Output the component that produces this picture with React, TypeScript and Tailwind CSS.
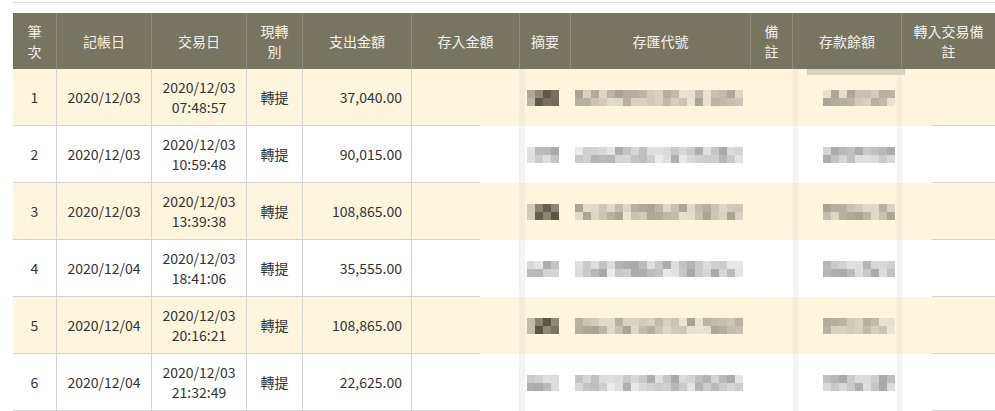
import React from "react";

const cols = "grid-cols-[44px_95px_95px_56px_109px_108px_51px_180px_42px_109px_93px]";

type Row = {
    no: number;
    postDate: string;
    txDate: string;
    txTime: string;
    type: string;
    out: string;
    seed: number;
    dark: boolean;
};

const rows: Row[] = [
    {no: 1, postDate: "2020/12/03", txDate: "2020/12/03", txTime: "07:48:57", type: "轉提", out: "37,040.00", seed: 3, dark: true},
    {no: 2, postDate: "2020/12/03", txDate: "2020/12/03", txTime: "10:59:48", type: "轉提", out: "90,015.00", seed: 11, dark: false},
    {no: 3, postDate: "2020/12/03", txDate: "2020/12/03", txTime: "13:39:38", type: "轉提", out: "108,865.00", seed: 23, dark: true},
    {no: 4, postDate: "2020/12/04", txDate: "2020/12/03", txTime: "18:41:06", type: "轉提", out: "35,555.00", seed: 37, dark: false},
    {no: 5, postDate: "2020/12/04", txDate: "2020/12/03", txTime: "20:16:21", type: "轉提", out: "108,865.00", seed: 41, dark: true},
    {no: 6, postDate: "2020/12/04", txDate: "2020/12/03", txTime: "21:32:49", type: "轉提", out: "22,625.00", seed: 53, dark: false},
];

// pseudo random gray mosaic, like the pixelated (censored) cells in the screenshot
const rand = (s: number) => {
    const x = Math.sin(s * 9301 + 49297) * 233280;
    return x - Math.floor(x);
};

const Mosaic = ({cells, seed, cream, dark}: { cells: number; seed: number; cream: boolean; dark?: boolean }) => {
    const grid: string[][] = [0, 1].map((r) =>
        Array.from({length: cells}, (_, c) => {
            let v = 155 + Math.floor(rand(seed + r * 31 + c * 7) * 80);
            if (dark && c >= cells - 3) v = 60 + Math.floor(rand(seed + c + r) * 70);
            const g = cream ? [v, v - 4, v - 22] : [v, v, v];
            return `rgb(${g[0]},${g[1]},${Math.max(g[2], 0)})`;
        })
    );
    return (
        <div className="flex flex-col opacity-85">
            {grid.map((line, r) => (
                <div key={r} className="flex">
                    {line.map((c, i) => (
                        <div key={i} className="w-[8px] h-[8px]" style={{backgroundColor: c}}/>
                    ))}
                </div>
            ))}
        </div>
    );
};

const App = () => {
    return (
        <div className="w-[995px] h-[411px] overflow-hidden bg-white pl-[13px] text-[14px] text-[#333333]"
             style={{fontFamily: '"Noto Sans CJK TC", "Noto Sans", sans-serif'}}>
            <div className="mt-[2px] h-px bg-[#dedede]"/>

            {/* header */}
            <div className={`mt-[10px] grid ${cols} h-[56px] bg-[#77745f] text-[#f3f2ea] leading-5`}>
                <div className="flex items-center justify-center text-center border-r border-[#8f8c79]">筆<br/>次</div>
                <div className="flex items-center justify-center border-r border-[#8f8c79]">記帳日</div>
                <div className="flex items-center justify-center border-r border-[#8f8c79]">交易日</div>
                <div className="flex items-center justify-center text-center border-r border-[#8f8c79]">現轉<br/>別</div>
                <div className="flex items-center justify-center border-r border-[#8f8c79]">支出金額</div>
                <div className="flex items-center justify-center border-r border-[#8f8c79]">存入金額</div>
                <div className="flex items-center justify-center border-r border-[#8f8c79]">摘要</div>
                <div className="flex items-center justify-center border-r border-[#8f8c79]">存匯代號</div>
                <div className="flex items-center justify-center text-center border-r border-[#8f8c79]">備<br/>註</div>
                <div className="flex items-center justify-center border-r border-[#8f8c79]">存款餘額</div>
                <div className="flex items-center justify-center text-center">轉入交易備<br/>註</div>
            </div>

            {/* body */}
            {rows.map((row) => {
                const cream = row.no % 2 === 1;
                const bg = cream ? "bg-[#fdf6dc]" : "bg-white";
                return (
                    <div key={row.no} className={`grid ${cols} h-[57px] ${bg} leading-5`}>
                        <div className="flex items-center justify-center border-b border-r border-[#d4d4d4]">{row.no}</div>
                        <div className="flex items-center justify-center border-b border-r border-[#d4d4d4]">{row.postDate}</div>
                        <div className="flex flex-col items-center justify-center border-b border-r border-[#d4d4d4]">
                            <span>{row.txDate}</span>
                            <span>{row.txTime}</span>
                        </div>
                        <div className="flex items-center justify-center border-b border-r border-[#d4d4d4]">{row.type}</div>
                        <div className="flex items-center justify-end pr-[9px] border-b border-r border-[#d4d4d4]">{row.out}</div>
                        <div className="bg-[linear-gradient(to_right,#d4d4d4_68px,transparent_68px)] bg-no-repeat bg-bottom bg-[length:100%_1px]"/>
                        <div className="flex items-center pl-[2px] border-l-[6px] border-[rgba(200,200,200,0.2)] -ml-px">
                            <Mosaic cells={4} seed={row.seed} cream={cream} dark={row.dark}/>
                        </div>
                        <div className="flex items-center pl-[4px]">
                            <Mosaic cells={21} seed={row.seed + 5} cream={cream}/>
                        </div>
                        <div/>
                        <div className="relative flex items-center justify-end pr-[2px] border-x-[5px] border-[rgba(200,200,200,0.2)]">
                            {row.no === 1 && <div className="absolute left-[9px] right-[-8px] top-0 h-[6px] bg-[#dad4bf]"/>}
                            <Mosaic cells={9} seed={row.seed + 9} cream={cream}/>
                        </div>
                        <div className="bg-[linear-gradient(to_right,transparent_30px,#d4d4d4_30px)] bg-no-repeat bg-bottom bg-[length:100%_1px]"/>
                    </div>
                );
            })}
        </div>
    );
};

export default App;
